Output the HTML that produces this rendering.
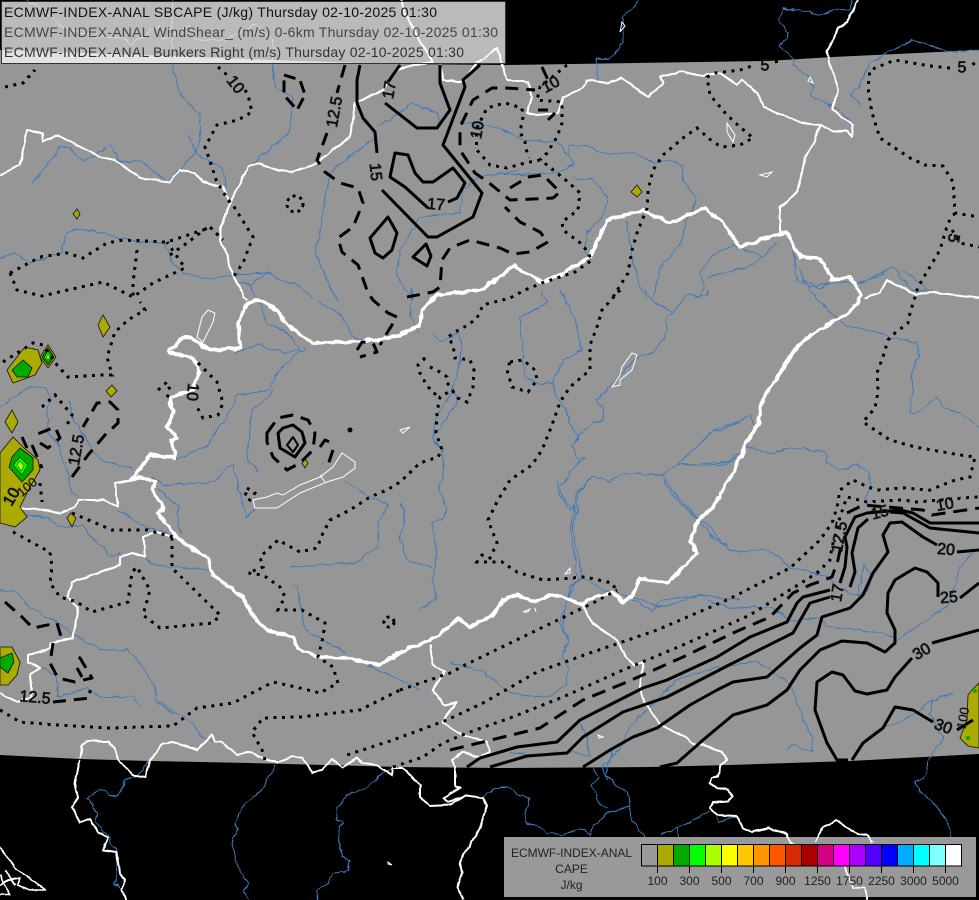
<!DOCTYPE html>
<html><head><meta charset="utf-8"><style>
html,body{margin:0;padding:0;background:#000}
svg{display:block}
.r{fill:none;stroke:#3d7abd;stroke-width:1;stroke-linejoin:round;filter:url(#wig)}
.w{fill:none;stroke:#fff;stroke-width:2;stroke-linejoin:round;filter:url(#wig2)}
.t{fill:none;stroke:#fff;stroke-width:1}
.h{fill:none;stroke:#fff;stroke-width:3.6;stroke-linejoin:round;filter:url(#wig)}
.d{fill:none;stroke:#000;stroke-width:3;stroke-dasharray:3 5.5;shape-rendering:crispEdges}
.a{fill:none;stroke:#000;stroke-width:3;stroke-dasharray:13 8;stroke-linejoin:round}
.s{fill:none;stroke:#000;stroke-width:3;stroke-linejoin:round}
.l{font-family:"Liberation Sans",sans-serif;font-size:16px;fill:#111;stroke:#111;stroke-width:.7;text-anchor:middle;dominant-baseline:central}
.o{fill:#aaaa00;stroke:#111;stroke-width:.8}
.g{fill:#00aa00;stroke:#111;stroke-width:.8}
.b{fill:#00ff00;stroke:#111;stroke-width:.6}
.y{fill:#aaff00;stroke:#111;stroke-width:.5}
.k{font-family:"Liberation Sans",sans-serif;font-size:12px;fill:#222;text-anchor:middle}
.m{font-family:"Liberation Sans",sans-serif;font-size:14px}
</style></head><body>
<svg width="979" height="900" viewBox="0 0 979 900" xmlns="http://www.w3.org/2000/svg">
<defs>
<filter id="wig" filterUnits="userSpaceOnUse" x="0" y="0" width="979" height="900" color-interpolation-filters="sRGB">
<feTurbulence type="fractalNoise" baseFrequency="0.12" numOctaves="2" seed="4"/>
<feDisplacementMap in="SourceGraphic" scale="5" xChannelSelector="R" yChannelSelector="G"/>
</filter>
<filter id="wig2" filterUnits="userSpaceOnUse" x="0" y="0" width="979" height="900" color-interpolation-filters="sRGB">
<feTurbulence type="fractalNoise" baseFrequency="0.1" numOctaves="2" seed="9"/>
<feDisplacementMap in="SourceGraphic" scale="3" xChannelSelector="R" yChannelSelector="G"/>
</filter>
</defs>
<rect width="979" height="900" fill="#000"/>
<polygon fill="#969696" points="0,50 170,56 300,61 400,64 505,65 767,61 833,57 979,50 979,754 850,761 730,765 650,767 500,768 400,767 250,763 150,761 80,759 0,755"/>

<g class="r">
<path d="M172,0L172,65L180,93L200,115L200,140L195,153L180,170L167,182M188,135L197,155L222,167L227,187"/>
<path d="M28,0L45,12L60,25L85,35L125,38L130,45L160,25L163,40L190,25L195,40L225,40L255,25L273,40L273,65L275,87L293,97L290,130L277,143L253,163"/>
<path d="M32,183L42,172L60,147L70,147L83,162L110,145L120,162L140,160L167,182"/>
<path d="M0,258L15,253L30,263L62,252L67,233L77,228L100,233L140,242L165,243L173,263L183,273L210,280L233,275L267,273L300,287L313,298"/>
<path d="M233,280L250,285L267,273M250,285L255,297"/>
<path d="M377,127L397,115L413,103L437,113L441,127M375,137L333,170L328,180L320,230L315,253L333,293L337,300"/>
<path d="M317,300L343,317L353,337L363,340"/>
<path d="M420,217L400,250L397,277L413,300L412,290L410,317L420,333"/>
<path d="M420,217L460,213L463,190L480,177L520,170"/>
<path d="M460,122L500,128L523,140L557,142L568,155L570,145L587,145L600,153L633,153L657,163L670,160L682,165L683,180L697,200L687,220L682,240L660,270L657,283L653,300"/>
<path d="M500,173L520,175L558,172L573,165L568,155"/>
<path d="M573,177L593,180L608,197L602,217L587,233L585,253L592,260"/>
<path d="M627,220L632,257L638,283L647,298"/>
<path d="M700,273L710,257L733,245L763,257L778,242M707,277L747,267L763,257M700,273L705,287L700,298"/>
<path d="M792,243L797,280L810,287L830,282L863,283L892,267L913,290L933,290"/>
<path d="M638,0L637,5L622,17L623,43L610,59L595,58L598,80"/>
<path d="M852,0L850,10L833,10L820,15L800,10L783,8L779,20L788,33L780,47L792,57L793,65L807,75L813,87L810,95L833,107L852,122"/>
<path d="M979,50L950,52L912,40L893,50L870,63L860,85L850,95L862,105"/>
<path d="M560,290L575,320L582,350L563,360L552,382L543,385L525,377L520,317L547,303L542,290"/>
<path d="M552,382L555,395L565,407L570,423L578,437L573,445L577,458L585,458L568,472L570,477L559,487L567,503L577,510L572,530L578,553L582,577L570,587L565,610L563,625L567,640"/>
<path d="M575,440L592,423L603,422L605,413L597,400L610,387L620,375L637,357L653,352L665,338L667,318L673,312L655,303L645,290M673,312L687,295L707,297L708,290"/>
<path d="M577,510L578,495L592,477L610,482L623,473L662,475L677,465L710,433L740,423M677,465L723,465L737,458"/>
<path d="M662,475L680,500L700,520L707,523L717,537L730,550L740,553"/>
<path d="M433,333L440,342L458,333L462,345L458,370L452,393L458,400L443,423L433,437L443,450L443,477L438,488L447,507L443,520L432,523L437,550L435,570L432,583L438,597L420,610M452,393L435,420L433,440L443,450"/>
<path d="M400,503L405,513L400,540L407,560L433,568"/>
<path d="M582,577L610,593L643,600L660,608L700,595L740,600"/>
<path d="M700,443L717,428L737,423L750,415L755,425"/>
<path d="M700,463L723,463L733,458L747,447L770,453L793,447L825,452L828,463L840,470L857,465L868,473L870,487L863,502"/>
<path d="M847,327L880,332L890,338L917,342L918,357L912,373L913,390L910,413L917,413L937,397L943,407L960,413L979,427"/>
<path d="M800,270L803,280L817,300L843,323L847,327M803,280L820,288L830,283M860,283L883,275L883,270M903,270L930,292"/>
<path d="M0,407L17,395L27,388L45,387L52,400L47,407L48,433L58,442L68,475L72,493L78,498"/>
<path d="M68,400L72,417L95,453L103,462L133,468"/>
<path d="M152,477L163,485L213,482L233,463L240,493L247,518L257,507"/>
<path d="M175,460L207,445L227,417L237,395L270,390L275,375L287,362L307,347M273,390L265,400L252,410L247,457L258,472"/>
<path d="M235,352L257,345L287,353L300,350M258,300L267,323L287,333L300,350"/>
<path d="M118,510L145,527L167,533"/>
<path d="M17,515L47,517L58,527L83,525L87,533L112,557L120,553"/>
<path d="M145,557L153,565L213,570"/>
<path d="M157,488L178,507L178,523L182,533"/>
<path d="M343,480L373,498L388,505L380,520L378,547L353,563L290,567"/>
<path d="M292,587L297,587L305,630L323,640L347,653"/>
<path d="M0,590L17,593L30,608L57,623L75,635L100,650L127,650L137,658L155,687L155,700L183,717L193,723L200,735L215,742"/>
<path d="M43,668L57,677L58,697L87,688L100,697L133,697L140,707M157,703L173,713"/>
<path d="M367,665L400,680L420,690M450,662L483,672L510,693L550,697L567,683L568,667L563,657L568,640L560,623L565,607L570,593L577,580L575,557L570,530L577,493L590,480"/>
<path d="M557,480L558,490L567,507L576,513M663,480L677,500L698,520L713,537L733,552L767,550L783,560L790,568L827,577L837,587L858,597L863,565L872,575L868,590L858,597"/>
<path d="M778,612L790,620L820,618L827,627L883,633L895,640L923,623L950,603L960,567L973,552"/>
<path d="M632,600L653,610L663,600L700,595L713,603L733,608L767,607L783,613"/>
<path d="M580,723L587,737L590,757L577,753L560,752L530,756L510,752M630,727L677,680L717,667L757,662L770,670L790,683L800,710L812,737L812,752L793,745L788,750"/>
<path d="M630,727L625,740L603,767L607,780"/>
<path d="M872,732L893,725L917,712L933,700L953,693M933,700L930,713L943,740L938,745L927,762L927,775L915,782L920,792L933,802L942,815L950,828L953,843"/>
<path d="M480,798L497,788L508,788L520,795L530,798L525,813L528,824L538,825L548,833L560,835L580,830L585,830L590,836L593,825L608,813L623,808L630,807L628,792L615,785L606,775L608,763L613,750"/>
<path d="M608,808L598,802L592,785L598,778L593,768"/>
<path d="M630,807L630,817L643,835L645,840M660,835L677,827L690,823L710,810M677,827L680,843M717,815L719,822L737,816"/>
<path d="M275,765L263,788L243,807L235,820L237,828L232,843L237,865L248,883L243,890L248,900"/>
<path d="M392,768L380,775L368,787L347,795L338,807L337,820L342,823L338,833L342,857L350,860L348,872L333,873L328,883L317,890L317,900"/>
<path d="M150,760L138,777L125,780L122,792L115,797L100,789L88,798L97,813L97,823L108,837L117,850L117,873L115,883L122,890"/>
</g>

<g class="w">
<path d="M0,175L20,165L27,130L43,133L43,142L57,135L100,157L115,160L140,178L170,182L180,170L195,173L203,182L223,187L230,203L220,230L220,240L227,255L232,275L240,287L243,297L248,300"/>
<path d="M230,203L248,167L258,163L277,170L292,172L317,163L350,137L355,103L383,90L397,70L413,65L433,62L417,37L405,13L402,0"/>
<path d="M440,65L443,80L463,82L477,63L497,48L503,67L507,80L528,82L532,97L527,113L537,115L558,113L563,97L583,88L587,80L607,83L622,78L648,97L663,83L660,77L683,71L703,76L720,73L737,85L742,80L758,93L763,107L783,115L802,123L820,125L833,131L847,131L852,137L853,125L833,110L838,90L828,57L827,52L838,28L847,22L858,0"/>
<path d="M820,125L815,142L805,157L802,173L797,192L780,208L780,233"/>
<path d="M865,298L880,293L887,280L917,295L930,292L957,295L979,298"/>
<path d="M132,480L115,483L118,507L103,500L78,500L75,507L60,513L47,510L13,508L0,513"/>
<path d="M175,538L157,532L143,537L145,557L132,553L120,557L120,565L93,575L72,582L68,597L78,608L73,638L50,643L50,648L28,655L28,662L40,668L30,675L32,697L17,702L0,693"/>
<path d="M583,605L592,623L617,640L625,657L635,665L643,662L640,687L645,702L660,725L682,735L695,745L702,745L722,752L727,760L721,765L718,777L712,778L710,783L717,788L728,790L732,797L728,801L713,802L710,808L717,815L737,816L743,828L752,832L768,828L787,834L790,843L843,863L853,887L865,888L867,900"/>
<path d="M815,843L822,828L830,825L836,820L857,834L867,835L873,843"/>
<path d="M430,645L433,665L445,672L432,690L445,705L457,702L448,713L443,722L458,733L487,742L490,752L480,757L462,752L452,760L455,767L455,787L460,788L443,798L448,802L465,796L483,798L487,805L480,828L460,862L462,873L457,887L463,900"/>
<path d="M80,758L82,745L87,741L108,741L115,750L118,760L133,775L145,777L150,760L163,743L173,742L197,750L212,735L215,742L222,742L237,755L250,752L265,759L277,763L293,756L302,758L312,772L322,770L332,759L343,767L357,758L363,763L377,765L392,775L393,768L403,768L408,773L420,785L420,797L430,806L450,805L465,796"/>
<path d="M80,760L75,783L78,798L72,807L80,823L90,819L98,832L108,837L103,850L117,852L120,873L125,880L122,890L126,900"/>
<path d="M0,847L17,870L35,882L45,890L30,890L17,885L20,878L8,880L0,885M5,870L15,885M0,875L10,895L0,895" stroke-width="1.6"/>
</g>
<g class="h">
<path d="M168,352L183,338L192,337L203,347L213,350L240,348L238,323L247,303L258,300L273,307L293,330L313,343L353,342L377,340L400,335L420,325L422,310L437,295L480,290L500,277L513,265L543,283L563,273L590,257L607,220L643,210L670,223L705,208L723,223L740,247L787,232L800,257L820,258L833,280L850,277L862,295L850,312L810,335L795,350L775,380L762,400L758,425L745,445L735,470L727,482L713,507L698,520L690,543L697,553L683,567L668,583L640,578L632,597L623,602L613,593L593,597L583,605L563,597L550,595L535,602L518,595L503,600L490,617L477,623L470,627L458,618L450,627L430,640L400,652L380,665L347,658L317,657L297,648L293,637L267,630L253,617L243,597L213,575L208,558L190,547L177,537L158,513L163,508L153,490L155,482L143,477L132,480L150,455L175,458L172,440L177,437L167,427L173,413L170,397L192,390L200,372L193,358L168,352"/>
</g>
<g class="t">
<path d="M342,453L355,462L355,468L343,477L327,482L300,493L277,508L255,508L253,500L267,497L277,493L283,495L300,485L320,477L333,467ZM320,475L325,482"/>
<path d="M208,310L215,313L213,322L203,342L197,337L202,317Z"/>
<path d="M632,353L637,355L632,370L620,380L620,385L612,387L620,375L622,367Z"/>
<path d="M727,123L735,135L733,142L727,132Z"/>
<path d="M760,175L772,172L767,177Z"/>
<path d="M565,574L570,568L570,573L565,574ZM400,430L410,427L403,433Z"/>
<path d="M523,612L530,609L528,612ZM535,608L536,612M598,735L603,737L599,738Z"/>
<path d="M810,77L813,83L808,81ZM622,22L620,32L625,26ZM388,862L392,865L388,864Z"/>
</g>

<!-- CAPE patches -->
<polygon class="o" points="25,347 38,350 42,363 35,375 13,383 7,370 20,353"/>
<polygon class="g" points="12,370 23,360 32,368 28,377 17,377"/>
<polygon class="o" points="40,357 48,345 56,357 48,368"/>
<polygon class="g" points="42,357 48,348 54,357 48,365"/>
<polygon class="b" points="44,357 48,351 52,357 48,362"/>
<polygon class="y" points="46,357 48,354 50,357 48,360"/>
<polygon class="o" points="103,315 110,327 103,337 98,325"/>
<polygon class="o" points="112,385 117,391 111,397 106,391"/>
<polygon class="o" points="12,410 18,422 12,433 5,422"/>
<polygon class="o" points="13,437 23,447 38,460 40,470 30,487 20,507 27,517 15,527 0,523 0,453"/>
<polygon class="g" points="20,448 33,458 33,470 22,482 9,467 12,457"/>
<polygon class="b" points="20,457 28,465 22,475 13,465"/>
<polygon class="y" points="20,461 24,466 21,471 17,465"/>
<polygon class="o" points="67,518 71,513 76,518 72,527"/>
<polygon class="o" points="0,647 12,647 20,662 17,675 8,685 0,685"/>
<polygon class="g" points="0,658 12,653 14,662 8,673 0,667"/>
<polygon class="o" points="77,209 80,214 77,219 73,214"/>
<polygon class="o" points="637,185 642,192 637,197 631,192"/>
<polygon class="o" points="305,459 308,463 305,468 302,463"/>
<polygon class="o" points="979,683 973,689 968,695 967,720 960,738 968,746 979,748"/>
<circle cx="975" cy="691" r="2" fill="#00aa00"/><circle cx="968" cy="738" r="2" fill="#00aa00"/>

<!-- dotted -->
<g class="d">
<path d="M5,87L23,83L35,70"/>
<path d="M218,67L227,75M245,90L248,95L252,112L238,120L217,125L205,147L213,170L215,178L228,200L233,205L253,237L243,263L233,277"/>
<path d="M10,273L40,257L67,253L83,258L107,243L123,240L167,242L203,230L210,227L223,240"/>
<path d="M10,273L17,290L42,296L68,290L103,282L133,297L153,283L185,268L167,242"/>
<path d="M137,250L133,283L133,297M170,255L187,243L208,227"/>
<circle cx="295" cy="204" r="8" fill="none" stroke-dasharray="3 4"/>
<path d="M3,362L33,343L43,345L57,365L68,377L102,375L112,375L107,357L115,332L128,320L145,310L140,302"/>
<path d="M198,363L217,382L223,403L218,415L203,418L197,407M158,390L167,382L170,390L167,398"/>
<path d="M42,407L55,395L72,415L67,425M40,483L42,502M13,532L33,543L50,552L52,567L50,583L60,597L77,602L92,612L128,602L132,572L137,567L150,590L143,615L160,628L213,623L220,615L172,568L172,537M72,513L112,530L147,530L173,537"/>
<path d="M0,710L20,722L57,725L110,728L173,726L197,708L233,703L273,682L300,688L320,693L338,683L333,667L318,657L323,637L325,623L302,610L278,610L285,597L280,587L263,575L248,573L263,567L260,557L278,540L300,552L317,548L323,533L330,520L350,510L370,497L387,490L400,482L420,463L438,457L442,450L436,433L437,415L438,407L440,397L452,390L458,398L467,402L473,387L474,370L470,360L455,358L453,345L448,337L455,332L468,325L477,318L483,305L510,298L525,290L542,283L575,272L592,260L583,245L563,230L562,222L578,210L580,193L568,182L547,165L540,160L525,163L507,168L490,165L477,150L476,130L487,108L505,103L522,108L523,117L520,132L525,142L528,158"/>
<path d="M247,488L255,493L250,500L245,497Z"/>
<path d="M425,358L418,365L420,373L425,382L432,392L440,397M430,367L442,373L447,377L448,384L453,390"/>
<path d="M510,362L523,360L535,370L537,380L528,392L512,387L507,370Z"/>
<circle cx="389" cy="622" r="5" fill="none" stroke-dasharray="3 4"/>
<path d="M567,65L540,87L537,100L562,102L562,123L557,137L547,153L540,160"/>
<path d="M613,297L628,273L632,250L637,233L647,208L648,190L653,170L663,155L683,138L697,128L713,142L722,147L740,145L753,138L740,127L727,115L710,95L707,77L715,73L740,70L755,65M775,62L783,60"/>
<path d="M620,290L602,310L597,327L590,345L590,370L570,387L560,402L552,425L542,450L532,465L510,480L497,502L488,520L497,543L490,558L482,555L477,562L502,562L517,572L543,580L585,577L612,583L618,593"/>
<path d="M975,63L970,66M950,68L930,66L895,60L870,70L868,88L872,113L880,138L910,158L925,165L943,166L953,182L955,213L979,217M952,230L960,243L979,247M955,213L948,223L940,250L918,287L915,297L910,313L908,323L895,333L888,340L883,357L877,373L878,392L875,408L863,422L875,430L890,440L915,447L960,455L975,457L970,477L955,480L930,490L903,488L877,490L868,487L853,480L840,490L837,507L832,523L820,540L790,568L727,600L657,630L593,652L537,672L483,703L447,720L393,740L347,755"/>
<path d="M400,690L450,673L465,665L537,630L593,603L617,590"/>
<path d="M265,760L262,750L252,732L263,718L300,717L360,710L400,690"/>
<path d="M393,767L423,757L443,743L467,733L510,718L563,697L623,670L683,645L750,615L817,573L830,560L832,547L840,517L847,497L867,502L903,500L917,502L963,498L979,497"/>
<path d="M165,763L205,765" />
</g>

<!-- dashed -->
<g class="a">
<path d="M345,65L337,93M327,133L317,160L325,172L340,183L358,188L363,203L353,227L338,238L342,252L358,265L368,293L373,300L388,313L397,317L387,333L380,345"/>
<path d="M357,350L362,342L373,343L377,352L360,357"/>
<path d="M284,75L300,80L305,95L297,110L284,95Z" stroke-dasharray="12 6"/>
<path d="M407,297L433,292L440,287L442,260L450,248L470,240L500,248L513,254L530,252L548,242L540,232L520,222L505,207"/>
<path d="M510,188L528,177L543,175L560,192L553,198L533,199L510,200L488,182L475,173L460,150L460,127L473,100L492,88L507,88L535,90"/>
<path d="M542,67L548,80M538,110L548,110M548,120L555,113"/>
<path d="M72,477L88,455L105,435L118,423L118,410L110,402L97,403L83,427"/>
<path d="M40,443L48,448L60,438L55,427L35,435M22,437L27,448M32,445L42,468"/>
<path d="M5,602L22,617L33,628L57,623L62,640"/>
<path d="M53,643L50,663L58,678L75,682L92,678L80,658L73,655M77,668L82,677"/>
<path d="M53,702L90,698L90,690"/>
<path d="M267,433L278,418L293,415L308,420L315,433L313,450L300,463L287,470L273,457L267,442Z"/>
<path d="M320,447L325,440L332,443M333,450L328,465L323,463"/>
<path d="M450,750L483,742L540,728L583,700L627,682L683,657L733,633L770,617L793,593L810,585L832,577L838,560L842,540M847,513L863,505L923,510L932,515L979,508" stroke-dasharray="14 8"/>
</g>
<g class="s">
<path d="M400,65L388,82M385,103L417,128L437,128L450,110L440,83L440,65"/>
<path d="M360,65L357,80L357,103L363,118L375,132L377,153M382,190L428,237L437,237L473,217L482,193L443,145L465,87L463,80L480,65"/>
<path d="M448,202L457,198L465,183L453,168L433,182L423,182L415,173L408,155L395,153L390,177L405,187L428,208"/>
<path d="M388,217L370,238L375,253L383,258L392,250L397,233Z"/>
<path d="M426,244L413,257L427,266L431,256Z"/>
<path d="M283,428L293,425L302,432L305,443L295,457L280,448L278,433Z"/>
<path d="M293,437L298,445L293,452L287,445Z" stroke-width="2"/>
<path d="M467,767L480,758L517,747L557,742L580,720L643,688L667,680L717,657L750,637L787,622L797,603L803,597L830,590M840,583L845,567L847,547L845,537L855,517L867,513L900,510L913,513L930,523L979,523"/>
<path d="M490,767L527,756L567,753L583,737L623,712L667,697L733,663L793,633L810,603L830,597M850,587L855,572L852,553L858,528L868,519M890,512L903,513L930,528L979,533"/>
<path d="M583,767L610,750L633,737L657,728L690,705L717,690L733,682L767,677L783,663L800,648L817,635L822,617L850,608L863,595L873,573L888,552L883,535L890,523L902,522L923,537L937,545M957,552L979,550"/>
<path d="M660,767L677,763L703,740L733,715L767,705L787,690L800,670L820,650L842,641L867,643L885,652L895,643L895,630L887,613L888,593L895,580L915,568L927,572L938,583L938,597M960,598L979,583"/>
<path d="M852,760L863,743L883,728L895,707L913,710L933,722M957,730L973,720M848,760L837,760L827,743L815,710L817,682L832,672L843,675L855,691L867,694L887,690L895,677L912,658M932,643L979,630"/>
<circle cx="350" cy="430" r="2.5" fill="#000" stroke="none"/>
</g>

<!-- contour labels -->
<text class="l" transform="translate(235,85) rotate(52)">10</text>
<text class="l" transform="translate(335,112) rotate(-80)">12.5</text>
<text class="l" transform="translate(390,90) rotate(-80)">17</text>
<text class="l" transform="translate(375,172) rotate(84)">15</text>
<text class="l" transform="translate(436,205) rotate(5)">17</text>
<text class="l" transform="translate(478,130) rotate(-80)">10</text>
<text class="l" transform="translate(551,85) rotate(-30)">10</text>
<text class="l" transform="translate(765,66)">5</text>
<text class="l" transform="translate(962,68)">5</text>
<text class="l" transform="translate(953,238) rotate(100)">5</text>
<text class="l" transform="translate(192,392) rotate(95)">10</text>
<text class="l" transform="translate(77,450) rotate(-80)">12.5</text>
<text class="l" transform="translate(35,698) rotate(5)">12.5</text>
<text class="l" transform="translate(12,497) rotate(-60)">10</text>
<text class="l" transform="translate(27,487) rotate(-40)" style="font-size:13px;stroke-width:.2">100</text>
<text class="l" transform="translate(840,537) rotate(-80)">12.5</text>
<text class="l" transform="translate(838,593) rotate(-80)">17</text>
<text class="l" transform="translate(880,513) rotate(-15)">15</text>
<text class="l" transform="translate(945,505) rotate(-10)">10</text>
<text class="l" transform="translate(946,550) rotate(5)">20</text>
<text class="l" transform="translate(949,598) rotate(-5)">25</text>
<text class="l" transform="translate(922,652) rotate(-30)">30</text>
<text class="l" transform="translate(943,727) rotate(20)">30</text>
<text class="l" transform="translate(963,718) rotate(-80)" style="font-size:13px;stroke-width:.2">100</text>

<!-- top legend -->
<rect x="1.5" y="1.5" width="504" height="62" fill="#fff" fill-opacity=".73" stroke="#333" stroke-width="1"/>
<text class="m" x="4" y="17" fill="#111" textLength="433" lengthAdjust="spacing">ECMWF-INDEX-ANAL SBCAPE (J/kg) Thursday 02-10-2025 01:30</text>
<text class="m" x="4" y="37" fill="#444" textLength="494" lengthAdjust="spacing">ECMWF-INDEX-ANAL WindShear_ (m/s) 0-6km Thursday 02-10-2025 01:30</text>
<text class="m" x="4" y="57" fill="#333" textLength="460" lengthAdjust="spacing">ECMWF-INDEX-ANAL Bunkers Right (m/s) Thursday 02-10-2025 01:30</text>

<!-- color legend -->
<rect x="504" y="837" width="472" height="60" fill="#999" style="mix-blend-mode:lighten"/>
<g stroke="#000" stroke-width="1">
<rect x="641.5" y="844.5" width="16" height="21.5" fill="#999"/>
<rect x="657.5" y="844.5" width="16" height="21.5" fill="#aaaa00"/>
<rect x="673.5" y="844.5" width="16" height="21.5" fill="#00aa00"/>
<rect x="689.5" y="844.5" width="16" height="21.5" fill="#00ff00"/>
<rect x="705.5" y="844.5" width="16" height="21.5" fill="#aaff00"/>
<rect x="721.5" y="844.5" width="16" height="21.5" fill="#ffff00"/>
<rect x="737.5" y="844.5" width="16" height="21.5" fill="#ffc800"/>
<rect x="753.5" y="844.5" width="16" height="21.5" fill="#ff9600"/>
<rect x="769.5" y="844.5" width="16" height="21.5" fill="#ff5500"/>
<rect x="785.5" y="844.5" width="16" height="21.5" fill="#d42c00"/>
<rect x="801.5" y="844.5" width="16" height="21.5" fill="#aa0000"/>
<rect x="817.5" y="844.5" width="16" height="21.5" fill="#d40080"/>
<rect x="833.5" y="844.5" width="16" height="21.5" fill="#ff00ff"/>
<rect x="849.5" y="844.5" width="16" height="21.5" fill="#aa00ff"/>
<rect x="865.5" y="844.5" width="16" height="21.5" fill="#5500ff"/>
<rect x="881.5" y="844.5" width="16" height="21.5" fill="#0000ff"/>
<rect x="897.5" y="844.5" width="16" height="21.5" fill="#00aaff"/>
<rect x="913.5" y="844.5" width="16" height="21.5" fill="#00ffff"/>
<rect x="929.5" y="844.5" width="16" height="21.5" fill="#80ffff"/>
<rect x="945.5" y="844.5" width="16" height="21.5" fill="#ffffff"/>
<path fill="none" d="M657.5,866V873M689.5,866V873M721.5,866V873M753.5,866V873M785.5,866V873M817.5,866V873M849.5,866V873M881.5,866V873M913.5,866V873M945.5,866V873"/>
</g>
<text class="k" x="571.5" y="857" textLength="121" lengthAdjust="spacing">ECMWF-INDEX-ANAL</text>
<text class="k" x="571.5" y="873">CAPE</text>
<text class="k" x="571.5" y="889">J/kg</text>
<g class="k">
<text x="657.5" y="885">100</text><text x="689.5" y="885">300</text><text x="721.5" y="885">500</text><text x="753.5" y="885">700</text><text x="785.5" y="885">900</text><text x="817.5" y="885">1250</text><text x="849.5" y="885">1750</text><text x="881.5" y="885">2250</text><text x="913.5" y="885">3000</text><text x="945.5" y="885">5000</text>
</g>
</svg>
</body></html>
